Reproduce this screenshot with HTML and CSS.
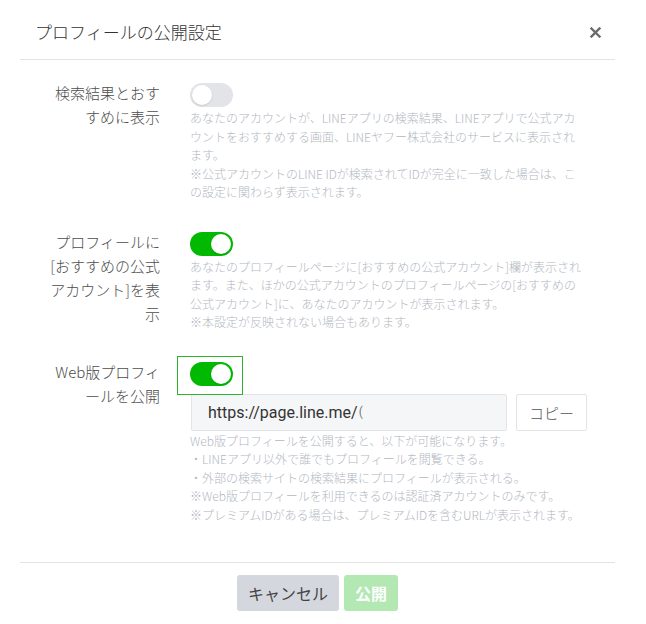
FILE: index.html
```html
<!DOCTYPE html>
<html lang="ja">
<head>
<meta charset="utf-8">
<title>プロフィールの公開設定</title>
<link rel="stylesheet" href="styles.css">
</head>
<body>
<div class="modal">
  <header class="modal-header">
    <h1 class="modal-title">プロフィールの公開設定</h1>
    <button class="close-btn" aria-label="閉じる">
      <svg width="11" height="11" viewBox="0 0 11 11"><path d="M1.5 1.5 L9.5 9.5 M9.5 1.5 L1.5 9.5" stroke="#6b6b6b" stroke-width="2.4" stroke-linecap="square"/></svg>
    </button>
  </header>
  <div class="modal-body">
    <div class="setting">
      <div class="setting-label">検索結果とおす<br>すめに表示</div>
      <div class="setting-content">
        <div class="toggle-row"><span class="toggle"></span></div>
        <p class="desc">あなたのアカウントが、LINEアプリの検索結果、LINEアプリで公式アカ<br>ウントをおすすめする画面、LINEヤフー株式会社のサービスに表示され<br>ます。<br>※公式アカウントのLINE IDが検索されてIDが完全に一致した場合は、こ<br>の設定に関わらず表示されます。</p>
      </div>
    </div>
    <div class="setting">
      <div class="setting-label">プロフィールに<br>[おすすめの公式<br>アカウント]を表<br>示</div>
      <div class="setting-content">
        <div class="toggle-row"><span class="toggle on"></span></div>
        <p class="desc">あなたのプロフィールページに[おすすめの公式アカウント]欄が表示され<br>ます。また、ほかの公式アカウントのプロフィールページの[おすすめの<br>公式アカウント]に、あなたのアカウントが表示されます。<br>※本設定が反映されない場合もあります。</p>
      </div>
    </div>
    <div class="setting">
      <div class="setting-label">Web版プロフィ<br>ールを公開</div>
      <div class="setting-content">
        <div class="toggle-row"><span class="toggle on focused"></span></div>
        <div class="url-row">
          <div class="url-field">https://page.line.me/<span class="url-tail">(</span></div>
          <button class="copy-btn">コピー</button>
        </div>
        <p class="desc desc-tight">Web版プロフィールを公開すると、以下が可能になります。<br>・LINEアプリ以外で誰でもプロフィールを閲覧できる。<br>・外部の検索サイトの検索結果にプロフィールが表示される。<br>※Web版プロフィールを利用できるのは認証済アカウントのみです。<br>※プレミアムIDがある場合は、プレミアムIDを含むURLが表示されます。</p>
      </div>
    </div>
  </div>
  <footer class="modal-footer">
    <button class="btn btn-cancel">キャンセル</button>
    <button class="btn btn-primary">公開</button>
  </footer>
</div>
</body>
</html>
```

FILE: styles.css
```css
* { box-sizing: border-box; }

html, body {
  margin: 0;
  padding: 0;
  background: #fff;
}

body {
  font-family: "Noto Sans CJK JP", "Noto Sans", sans-serif;
  font-weight: 300;
  color: #444;
}

.modal {
  margin: 0 31px 0 20px;
  width: 595px;
}

.modal-header {
  display: flex;
  align-items: center;
  justify-content: space-between;
  padding: 20px 14px 15px 15px;
  border-bottom: 1px solid #e4e4e4;
}

.modal-title {
  margin: 0;
  font-size: 17px;
  line-height: 24px;
  font-weight: 300;
  color: #333;
}

.close-btn {
  border: 0;
  background: none;
  padding: 0;
  width: 11px;
  height: 11px;
  display: flex;
  cursor: pointer;
}

.modal-body {
  padding: 21px 15px 38px 15px;
  display: flex;
  flex-direction: column;
  gap: 28px;
}

.setting {
  display: grid;
  grid-template-columns: 125px 1fr;
  column-gap: 30px;
  align-items: start;
}

.setting-label {
  text-align: right;
  font-size: 15px;
  line-height: 24px;
  color: #4d4d4d;
}

.setting-content {
  display: flex;
  flex-direction: column;
}

.toggle-row {
  height: 26px;
  padding-top: 2px;
}

.toggle {
  position: relative;
  display: block;
  width: 43px;
  height: 24px;
  border-radius: 12px;
  background: #e2e4e8;
}

.toggle::after {
  content: "";
  position: absolute;
  top: 2px;
  left: 2px;
  width: 20px;
  height: 20px;
  border-radius: 50%;
  background: #fff;
  box-shadow: 0 1px 2px rgba(0, 0, 0, 0.12);
}

.toggle.on {
  background: #00b900;
}

.toggle.on::after {
  left: 21px;
}

.toggle.focused::before {
  content: "";
  position: absolute;
  left: -13px;
  top: -6px;
  right: -10px;
  bottom: -9px;
  border: 1px solid #2cb52c;
}

.desc {
  margin: 2px 0 0;
  font-size: 12px;
  line-height: 18.5px;
  color: #b3b8bf;
  white-space: nowrap;
}

.desc-tight {
  margin-top: 1px;
}

.url-row {
  display: flex;
  gap: 9px;
  margin-top: 8px;
  margin-left: 1px;
}

.url-field {
  width: 316px;
  height: 37px;
  display: flex;
  align-items: center;
  padding: 0 16px;
  background: #f5f6f8;
  border: 1px solid #e2e4e7;
  border-radius: 2px;
  font-family: Roboto, "Noto Sans", sans-serif;
  font-weight: 400;
  font-size: 16px;
  color: #333;
  white-space: nowrap;
}

.url-tail {
  font-size: 12px;
  color: #777;
  margin-left: 1px;
}

.copy-btn {
  width: 71px;
  height: 37px;
  border: 1px solid #e2e4e7;
  border-radius: 2px;
  background: #fff;
  font-family: "Noto Sans CJK JP", sans-serif;
  font-weight: 300;
  font-size: 15px;
  color: #555;
  padding: 0;
}

.modal-footer {
  border-top: 1px solid #e4e4e4;
  padding: 12px 0 12px;
  display: flex;
  justify-content: center;
  gap: 5px;
}

.btn {
  height: 36px;
  border: 0;
  border-radius: 3px;
  padding: 0 11px;
  font-family: "Noto Sans CJK JP", sans-serif;
  font-weight: 400;
  font-size: 16px;
}

.btn-cancel {
  background: #d4d8de;
  color: #444;
}

.btn-primary {
  background: #b3e8b3;
  color: #fff;
  font-weight: 700;
}
```
